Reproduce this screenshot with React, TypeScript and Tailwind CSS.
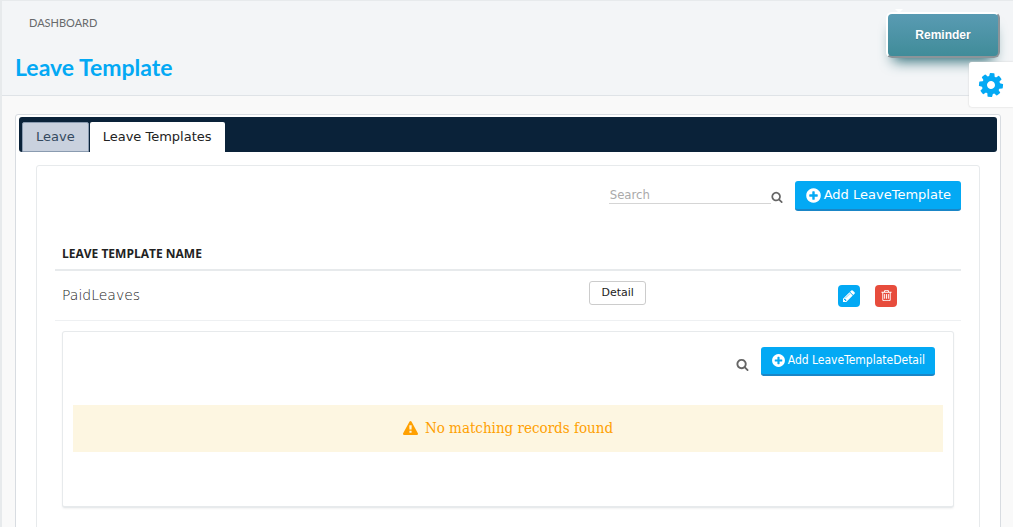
import React from "react";

const PATHS = {
  cog: "M1152 896q0-106-75-181t-181-75-181 75-75 181 75 181 181 75 181-75 75-181zm512-109v222q0 12-8 23t-20 13l-185 28q-19 54-39 91 35 50 107 138 10 12 10 25t-9 23q-27 37-99 108t-94 71q-12 0-26-9l-138-108q-44 23-91 38-16 136-29 186-7 28-36 28h-222q-14 0-24.5-8.5t-11.5-21.5l-28-184q-49-16-90-37l-141 107q-10 9-25 9-14 0-25-11-126-114-165-168-7-10-7-23 0-12 8-23 15-21 51-66.5t54-70.5q-27-50-41-99l-183-27q-13-2-21-12.5t-8-23.5v-222q0-12 8-23t19-13l186-28q14-46 39-92-40-57-107-138-10-12-10-24 0-10 9-23 26-36 98.5-107.5t94.5-71.5q13 0 26 10l138 107q44-23 91-38 16-136 29-186 7-28 36-28h222q14 0 24.5 8.5t11.5 21.5l28 184q49 16 90 37l142-107q9-9 24-9 13 0 25 10 129 119 165 170 7 8 7 22 0 12-8 23-15 21-51 66.5t-54 70.5q26 50 41 98l183 28q13 2 21 12.5t8 23.5z",
  plus: "M1344 960v-128q0-26-19-45t-45-19h-256v-256q0-26-19-45t-45-19h-128q-26 0-45 19t-19 45v256h-256q-26 0-45 19t-19 45v128q0 26 19 45t45 19h256v256q0 26 19 45t45 19h128q26 0 45-19t19-45v-256h256q26 0 45-19t19-45zm320-64q0 209-103 385.5t-279.5 279.5-385.5 103-385.5-103-279.5-279.5-103-385.5 103-385.5 279.5-279.5 385.5-103 385.5 103 279.5 279.5 103 385.5z",
  search:
    "M1216 832q0-185-131.5-316.5t-316.5-131.5-316.5 131.5-131.5 316.5 131.5 316.5 316.5 131.5 316.5-131.5 131.5-316.5zm512 832q0 52-38 90t-90 38q-54 0-90-38l-343-342q-179 124-399 124-143 0-273.5-55.5t-225-150-150-225-55.5-273.5 55.5-273.5 150-225 225-150 273.5-55.5 273.5 55.5 225 150 150 225 55.5 273.5q0 220-124 399l343 343q37 37 37 90z",
  pencil:
    "M491 1536l91-91-235-235-91 91v107h128v128h107zm523-928q0-22-22-22-10 0-17 7l-542 542q-7 7-7 17 0 22 22 22 10 0 17-7l542-542q7-7 7-17zm-54-192l416 416-832 832h-416v-416zm683 96q0 53-37 90l-166 166-416-416 166-165q36-38 90-38 53 0 91 38l235 234q37 39 37 91z",
  trash:
    "M704 736v576q0 14-9 23t-23 9h-64q-14 0-23-9t-9-23v-576q0-14 9-23t23-9h64q14 0 23 9t9 23zm256 0v576q0 14-9 23t-23 9h-64q-14 0-23-9t-9-23v-576q0-14 9-23t23-9h64q14 0 23 9t9 23zm256 0v576q0 14-9 23t-23 9h-64q-14 0-23-9t-9-23v-576q0-14 9-23t23-9h64q14 0 23 9t9 23zm128 724v-948h-896v948q0 22 7 40.5t14.5 27 10.5 8.5h832q3 0 10.5-8.5t14.5-27 7-40.5zm-672-1076h448l-48-117q-7-9-17-11h-317q-10 2-17 11zm928 32v64q0 14-9 23t-23 9h-96v948q0 83-47 143.5t-113 60.5h-832q-66 0-113-58.5t-47-141.5v-952h-96q-14 0-23-9t-9-23v-64q0-14 9-23t23-9h309l70-167q15-37 54-63t79-26h320q40 0 79 26t54 63l70 167h309q14 0 23 9t9 23z",
  warning:
    "M1024 1375v-190q0-14-9.5-23.5t-22.5-9.5h-192q-13 0-22.5 9.5t-9.5 23.5v190q0 14 9.5 23.5t22.5 9.5h192q13 0 22.5-9.5t9.5-23.5zm-2-374l18-459q0-12-10-19-13-11-24-11h-220q-11 0-24 11-10 7-10 21l17 457q0 10 10 16.5t24 6.5h185q14 0 23.5-6.5t10.5-16.5zm-14-934l768 1408q35 63-2 126-17 29-46.5 46t-63.5 17h-1536q-34 0-63.5-17t-46.5-46q-37-63-2-126l768-1408q17-31 47-49t65-18 65 18 47 49z",
};

function Icon({ name, className }: { name: keyof typeof PATHS; className: string }) {
  return (
    <svg viewBox="0 0 1792 1792" fill="currentColor" aria-hidden="true" className={`shrink-0 ${className}`}>
      <path d={PATHS[name]} />
    </svg>
  );
}

function Header() {
  return (
    <header className="h-[95px] border-b border-[#dfe3e7] bg-[#f3f5f7] pt-[14px] pl-[13px] font-['Lato',sans-serif]">
      <a href="#" className="ml-[14px] block w-max text-[11px] leading-4 text-[#676a6c]">
        DASHBOARD
      </a>
      <h1 className="mt-5 text-[23px] leading-8 font-bold text-[#03a9f4]">Leave Template</h1>
    </header>
  );
}

function Tabs() {
  return (
    <div role="tablist" className="flex h-[35px] items-end gap-px rounded-[3px] bg-[#0a2239] pl-[3px] text-[13px]">
      <button role="tab" aria-selected="false" className="h-[30px] rounded-t-[2px] border border-[#8a9bb0] bg-[#c9d1de] px-[13px] text-[#34495e]">
        Leave
      </button>
      <button role="tab" aria-selected="true" className="h-[30px] rounded-t-[2px] bg-white px-[13px] text-[#222]">
        Leave Templates
      </button>
    </div>
  );
}

function DetailPanel() {
  return (
    <section className="mx-[7px] mt-[10px] h-[177px] rounded-[3px] border border-b-2 border-[#e7eaec] px-[10px] pt-[15px] shadow-xs">
      <div className="flex items-start justify-end pr-2">
        <button aria-label="Search details" className="mt-[11px] mr-3 text-[#666]">
          <Icon name="search" className="block size-[13px]" />
        </button>
        <button className="flex h-[29px] items-center gap-[2px] rounded-[3px] border-b-2 border-[#1a86c7] bg-[#03a9f4] px-[10px] font-['DejaVu_Sans_Condensed','DejaVu_Sans',sans-serif] text-xs text-white">
          <Icon name="plus" className="size-[15px]" />
          Add LeaveTemplateDetail
        </button>
      </div>
      <div className="mt-[29px] flex h-[47px] items-center justify-center gap-[7px] bg-[#fdf6e1] pt-px font-['DejaVu_Serif_Condensed','DejaVu_Serif',serif] text-[15px] text-[#ffa000]">
        <Icon name="warning" className="size-[15px]" />
        No matching records found
      </div>
    </section>
  );
}

export default function App() {
  return (
    <div className="relative h-screen overflow-hidden border-t border-l-2 border-[#e7eaec] bg-[#f9f9f9] font-['DejaVu_Sans',sans-serif]">
      <Header />
      <main className="mt-[18px] mr-3 ml-[13px] min-h-screen rounded-[3px] border border-[#d8dce1] bg-white p-[3px] pt-[2px]">
        <Tabs />
        <section className="mx-[17px] mt-[13px] min-h-screen rounded-[3px] border border-[#e7eaec] px-[18px] pt-[15px]">
          <div className="flex items-start justify-end">
            <input
              type="text"
              aria-label="Search"
              placeholder="Search"
              className="mt-1 h-[19px] w-[162px] border-b border-[#d5d5d5] pt-[2px] pl-px font-['DejaVu_Sans_Condensed','DejaVu_Sans',sans-serif] text-[13px] text-[#444] outline-none placeholder:text-[#aaa]"
            />
            <button aria-label="Run search" className="mt-[10px] mr-3 text-[#666]">
              <Icon name="search" className="block size-3" />
            </button>
            <button className="flex h-[30px] items-center gap-[2px] rounded-[3px] border-b-2 border-[#1a86c7] bg-[#03a9f4] px-[10px] text-[13px] text-white">
              <Icon name="plus" className="size-[17px]" />
              Add LeaveTemplate
            </button>
          </div>
          <table className="mt-[25px] w-full table-fixed text-left">
            <thead>
              <tr className="h-[34px] border-b-2 border-[#e7eaec]">
                <th className="w-[58%] px-[7px] pt-[2px] font-['Open_Sans',sans-serif] text-xs font-bold text-[#222]">LEAVE TEMPLATE NAME</th>
                <th className="w-[28%]" />
                <th />
              </tr>
            </thead>
            <tbody>
              <tr className="h-[50px] border-b border-[#eef0f2]">
                <td className="px-[7px] text-sm font-extralight text-[#222]">PaidLeaves</td>
                <td className="px-[9px] pb-1">
                  <button className="block h-6 rounded-[3px] border border-[#ccc] bg-white px-[11px] text-[11px] text-[#222]">Detail</button>
                </td>
                <td className="px-1 pt-px">
                  <div className="flex gap-[15px]">
                    <button aria-label="Edit" className="flex size-[22px] items-center justify-center rounded-[4px] bg-[#03a9f4] text-white">
                      <Icon name="pencil" className="size-[14px]" />
                    </button>
                    <button aria-label="Delete" className="flex size-[22px] items-center justify-center rounded-[4px] bg-[#e74c3c] text-white">
                      <Icon name="trash" className="size-[13px]" />
                    </button>
                  </div>
                </td>
              </tr>
            </tbody>
          </table>
          <DetailPanel />
        </section>
      </main>
      <svg viewBox="0 0 8 4" aria-hidden="true" className="absolute top-2 right-[110px] h-1 w-2 fill-white">
        <path d="M0 0h8L4 4z" />
      </svg>
      <button className="absolute top-[11px] right-[13px] h-[46px] w-[114px] rounded-[6px] border-2 border-t-white border-r-[#8c9499] border-b-[#8c9499] border-l-white bg-linear-to-b from-[#599bb3] to-[#408c99] font-['Liberation_Sans',sans-serif] text-xs font-bold text-white shadow-[0_10px_14px_-7px_#276873] text-shadow-[0_1px_0_#3d768a]">
        Reminder
      </button>
      <button aria-label="Settings" className="absolute top-[61px] right-0 flex h-[45px] w-11 items-center justify-center rounded-l-[3px] bg-white text-[#03a9f4] shadow-[0_0_2px_#ccc]">
        <Icon name="cog" className="size-7 rotate-6" />
      </button>
    </div>
  );
}
